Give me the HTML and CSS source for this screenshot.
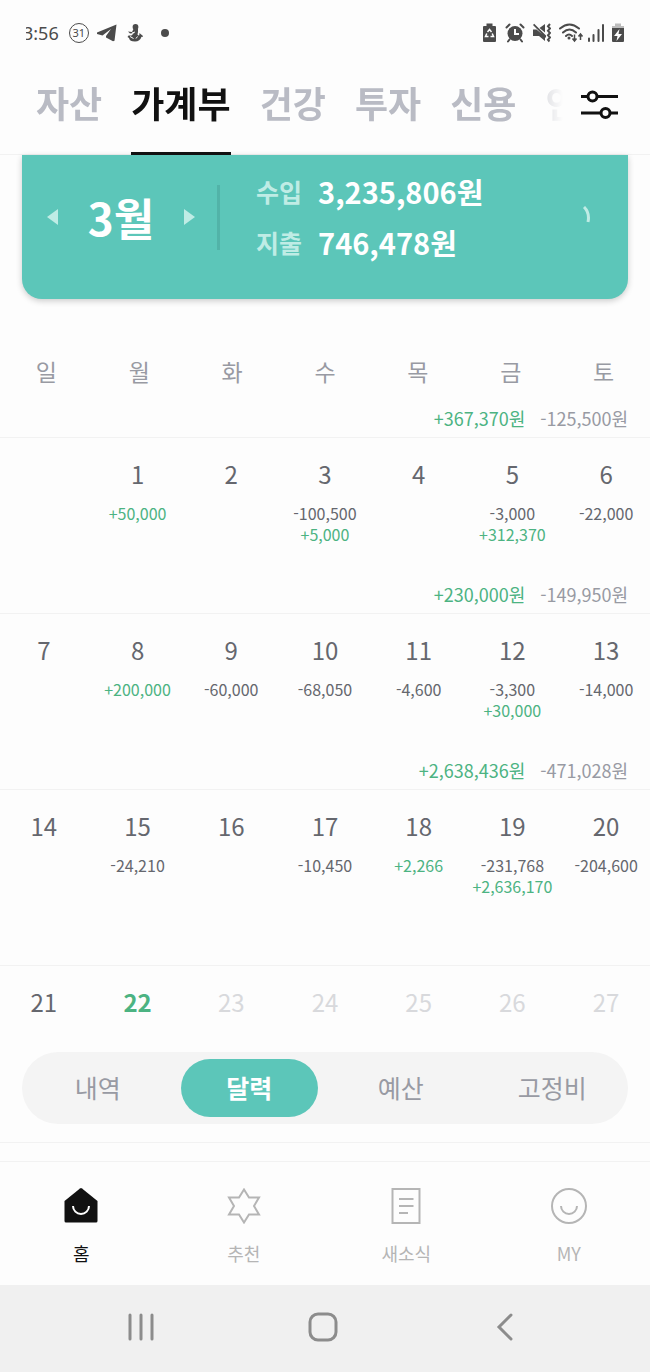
FILE: index.html
```html
<!DOCTYPE html>
<html lang="ko">
<head>
<meta charset="utf-8">
<meta name="viewport" content="width=device-width, initial-scale=1">
<title>가계부</title>
<link rel="stylesheet" href="styles.css">
</head>
<body>
<div class="app">
  <div class="status">
    <div class="status-left">
      <span class="clock">3:56</span>
      <span class="date-badge">31</span>
      <svg class="plane" width="20" height="18" viewBox="0 0 20 18"><path d="M19.500.5 0 8.500v1.500l5.500 1.500L14 5 9 12v1.500l7 3.800 1.500-.5z"/></svg>
      <svg class="figure" width="16" height="18" viewBox="0 0 16 18"><circle cx="8.500" cy="3" r="2.900"/><path d="M6.500 5h4.500v3l-.5 2.500q1 1.500 2 .5l-.5-1.500h1l3 2.500-.5 1-1-.3q-1.500 4.800-6.500 4.800-5.500 0-6-3.500l-1.500-1 1-1.500h3l2.500-2.500L3 9.500 1 7.500 5 8z"/><path class="cut" d="m3 12.500 3.500 2M10.500 12.500l-1.500 2M5 9l3-1"/></svg>
      <span class="dot"></span>
    </div>
    <div class="status-right">
      <svg width="14" height="20" viewBox="0 0 14 20"><path d="M3.500.5h6V3H12q1 0 1 1v14q0 1-1 1H1q-1 0-1-1V4q0-1 1-1h2.500z"/><path class="recycle" d="m4.500 9 2-2.500 2 2.500M3.800 10.500 2.500 13.500H5.500M9.200 10.500l1.300 3H7.500"/></svg>
      <svg width="20" height="20" viewBox="0 0 20 20"><circle cx="10" cy="10.500" r="7.500"/><path class="line" d="m1.500 4.500 3-3M18.500 4.500l-3-3M4.500 16.500 3 18.500M15.500 16.500l1.500 2"/><path class="cut" d="M10 6v5h4"/></svg>
      <svg width="18" height="20" viewBox="0 0 18 20"><path d="M0 6.500h3.500L12 13.500V18l-6-5H0zM6.500 5 12 1v8.500zM0 2l1.200-1.200L13 12.500v2.500z"/><path class="wave" d="m17 1-2 2.300 2 2.200-2 2.300 2 2.200-2 2.300 2 2.200-2 2.300 1.500 1.700"/></svg>
      <svg class="wifi" width="25" height="20" viewBox="0 0 25 20"><path class="line" d="M1 5.500q9.500-8 19 0M4 9.500q6.500-6 13 0M7 13q3-3 6 0"/><circle cx="10" cy="15" r="1.500"/><path class="arrows" d="M15.500 11.500V18m-2-2.500 2 2.500 2-2.500M21.500 17v-6m-2 2.500 2-2.500 2 2.500"/></svg>
      <svg width="16" height="20" viewBox="0 0 16 20"><path class="line" d="M1 15.500V18M5.500 12v6M10.500 7v11M15 2v16"/></svg>
      <svg width="12" height="20" viewBox="0 0 12 20"><path class="pale" d="M3 .5h6V3h3v3H0V3h3z"/><path d="M0 5h12v13q0 1-1 1H1q-1 0-1-1z"/><path class="white" d="M7.500 6 2 13h3.500L4.500 18 10 11H6.500z"/></svg>
    </div>
  </div>

  <header class="top">
    <nav class="tabs">
      <a href="#">자산</a><a href="#" class="active">가계부</a><a href="#">건강</a><a href="#">투자</a><a href="#">신용</a><a href="#">인증</a>
    </nav>
    <button class="filter" aria-label="메뉴 설정">
      <svg width="37" height="34" viewBox="0 0 37 34"><path d="M0 9.500h6.500m10 0H37M0 26h19.500m10 0H37"/><circle cx="11.500" cy="9.500" r="4.500"/><circle cx="24.500" cy="26" r="4.500"/></svg>
    </button>
  </header>

  <main>
    <section class="card">
      <div class="month">
        <button aria-label="이전 달"><svg width="11" height="18" viewBox="0 0 11 18"><path d="M11 1v16L0 9z"/></svg></button>
        <h1>3월</h1>
        <button aria-label="다음 달"><svg width="11" height="18" viewBox="0 0 11 18"><path d="M0 1v16l11-8z"/></svg></button>
      </div>
      <dl class="totals">
        <dt>수입</dt><dd>3,235,806원</dd>
        <dt>지출</dt><dd>746,478원</dd>
      </dl>
      <svg class="spinner" width="8" height="18" viewBox="0 0 8 18"><path d="M1 1q6 6 4 15"/></svg>
    </section>

    <div class="weekdays"><span>일</span><span>월</span><span>화</span><span>수</span><span>목</span><span>금</span><span>토</span></div>

    <div class="calendar-wrap">
    <table class="calendar">
      <tbody>
        <tr class="sum"><td colspan="7"><span class="in">+367,370원</span><span>-125,500원</span></td></tr>
        <tr class="week">
          <td></td>
          <td><b>1</b><p class="in">+50,000</p></td>
          <td><b>2</b></td>
          <td><b>3</b><p>-100,500</p><p class="in">+5,000</p></td>
          <td><b>4</b></td>
          <td><b>5</b><p>-3,000</p><p class="in">+312,370</p></td>
          <td><b>6</b><p>-22,000</p></td>
        </tr>
        <tr class="sum"><td colspan="7"><span class="in">+230,000원</span><span>-149,950원</span></td></tr>
        <tr class="week">
          <td><b>7</b></td>
          <td><b>8</b><p class="in">+200,000</p></td>
          <td><b>9</b><p>-60,000</p></td>
          <td><b>10</b><p>-68,050</p></td>
          <td><b>11</b><p>-4,600</p></td>
          <td><b>12</b><p>-3,300</p><p class="in">+30,000</p></td>
          <td><b>13</b><p>-14,000</p></td>
        </tr>
        <tr class="sum"><td colspan="7"><span class="in">+2,638,436원</span><span>-471,028원</span></td></tr>
        <tr class="week">
          <td><b>14</b></td>
          <td><b>15</b><p>-24,210</p></td>
          <td><b>16</b></td>
          <td><b>17</b><p>-10,450</p></td>
          <td><b>18</b><p class="in">+2,266</p></td>
          <td><b>19</b><p>-231,768</p><p class="in">+2,636,170</p></td>
          <td><b>20</b><p>-204,600</p></td>
        </tr>
        <tr class="sum"><td colspan="7"></td></tr>
        <tr class="week last">
          <td><b>21</b></td>
          <td class="today"><b>22</b></td>
          <td class="future"><b>23</b></td>
          <td class="future"><b>24</b></td>
          <td class="future"><b>25</b></td>
          <td class="future"><b>26</b></td>
          <td class="future"><b>27</b></td>
        </tr>
      </tbody>
    </table>
    </div>

    <div class="views">
      <button>내역</button><button class="active">달력</button><button>예산</button><button>고정비</button>
    </div>
  </main>

  <nav class="bottom">
    <a href="#" class="active">
      <svg width="36" height="36" viewBox="0 0 36 36"><path class="solid" d="M17 .5q1-.8 2 0L34.500 13V33q0 1.500-1.500 1.500H3Q1.500 34.500 1.500 33V13z"/><path class="smile" d="M10 18a8 8 0 0 0 16 0"/></svg>
      <span>홈</span>
    </a>
    <a href="#">
      <svg width="36" height="36" viewBox="0 0 36 36"><path d="m18 1.500 5 8h10L28 18l5 8.500H23l-5 8-5-8H3L8 18 3 9.500h10z"/></svg>
      <span>추천</span>
    </a>
    <a href="#">
      <svg width="36" height="36" viewBox="0 0 36 36"><path d="M4.500 1h27v34h-27zM11 11h14.500M11 18h14.500M11 25h9"/></svg>
      <span>새소식</span>
    </a>
    <a href="#">
      <svg width="36" height="36" viewBox="0 0 36 36"><circle cx="18" cy="18" r="17"/><path d="M10 18a8 8 0 0 0 16 0"/></svg>
      <span>MY</span>
    </a>
  </nav>

  <div class="system">
    <button aria-label="최근 앱"><svg width="30" height="30" viewBox="0 0 30 30"><path d="M4 3v24M15 3v24M26 3v24"/></svg></button>
    <button aria-label="홈 화면"><svg width="30" height="30" viewBox="0 0 30 30"><rect x="2" y="2" width="26" height="26" rx="8"/></svg></button>
    <button aria-label="뒤로"><svg width="30" height="30" viewBox="0 0 30 30"><path d="M21 3 9 15l12 12"/></svg></button>
  </div>
</div>
</body>
</html>
```
FILE: styles.css
```css
* { box-sizing: border-box; }

body {
  margin: 0;
  background: #fdfdfd;
  color: #65676e;
  font-family: "Noto Sans CJK KR", sans-serif;
}

button {
  border: 0;
  padding: 0;
  background: none;
  font: inherit;
  color: inherit;
}

a { color: inherit; text-decoration: none; }
svg { display: block; flex: none; }

.app {
  min-height: 100vh;
  display: flex;
  flex-direction: column;
  overflow: hidden;
}

/* Device status bar */
.status {
  height: 65px;
  padding: 0 26px;
  display: flex;
  align-items: center;
  justify-content: space-between;
  color: #4b4b4b;
}
.status-left, .status-right { display: flex; align-items: center; }
.status-right { gap: 8px; }
.status svg { fill: #4b4b4b; }
.status .line { fill: none; stroke: #4b4b4b; stroke-width: 2; stroke-linecap: round; }
.status .wave { fill: none; stroke: #4b4b4b; stroke-width: 2; }
.status .arrows { fill: none; stroke: #4b4b4b; stroke-width: 1.5; }
.status .cut { fill: none; stroke: #fdfdfd; stroke-width: 2; }
.status .recycle { fill: none; stroke: #fdfdfd; stroke-width: 1.5; }
.status .figure .cut { stroke-width: 1; }
.status .pale { fill: #bdbdbd; }
.status .white { fill: #fdfdfd; }
.wifi { margin-right: -4px; }
.clock {
  overflow: hidden;
  text-indent: -3px;
  font: 18px/24px "Noto Sans", sans-serif;
}
.date-badge {
  width: 20px;
  height: 20px;
  margin: 0 8px 0 10px;
  border: 1px solid #4b4b4b;
  border-radius: 50%;
  text-align: center;
  font: 11px/18px "Noto Sans", sans-serif;
}
.figure { margin: 0 18px 0 10px; }
.dot { width: 8px; height: 8px; border-radius: 50%; background: #4b4b4b; }

/* Section tabs */
.top {
  height: 90px;
  padding-right: 32px;
  display: flex;
  align-items: stretch;
  border-bottom: 1px solid #f2f2f2;
}
.tabs {
  flex: 1;
  min-width: 0;
  margin: 0 18px -1px 0;
  padding-left: 36px;
  display: flex;
  gap: 29px;
  overflow: hidden;
  white-space: nowrap;
  font-size: 36px;
  font-weight: bold;
  line-height: 74px;
  color: #b9bbc4;
  -webkit-mask-image: linear-gradient(to left, transparent, #000 44px);
  mask-image: linear-gradient(to left, transparent, #000 44px);
}
.tabs a { flex: none; }
.tabs .active { color: #111; border-bottom: 3px solid #111; }
.filter { height: 78px; }
.filter svg { fill: none; stroke: #111; stroke-width: 3; }

/* Month summary */
.card {
  margin: 0 22px;
  padding: 11px 37px 31px 25px;
  display: flex;
  align-items: center;
  background: #5cc6b9;
  border-radius: 0 0 20px 20px;
  box-shadow: 0 2px 6px rgba(0, 0, 0, .2);
  color: #fff;
}
.month {
  width: 173px;
  height: 65px;
  padding-right: 22px;
  display: flex;
  align-items: center;
  justify-content: space-between;
  border-right: 3px solid #52b3a8;
}
.month svg { fill: #bfece5; }
.month h1 { margin: 0; font-size: 44px; line-height: 64px; }
.totals {
  flex: 1;
  margin: 0;
  padding-left: 36px;
  display: grid;
  grid-template-columns: auto 1fr;
  column-gap: 16px;
  font-weight: bold;
  line-height: 51px;
}
.totals dt { font-size: 25px; color: #bfece5; }
.totals dd { margin: 0; font-size: 29px; }
.spinner { fill: none; stroke: #bfece5; stroke-width: 3; margin-bottom: 4px; }

/* Calendar */
.weekdays {
  margin-top: 43px;
  display: grid;
  grid-template-columns: repeat(7, 1fr);
  text-align: center;
  font-size: 23px;
  line-height: 58px;
  color: #989aa3;
}
.calendar-wrap { margin: 0 -3px; }
.calendar {
  width: 100%;
  border-collapse: collapse;
  table-layout: fixed;
}
.calendar td { padding: 0; }
.sum td {
  height: 37px;
  padding-right: 25px;
  text-align: right;
  font-size: 18px;
  line-height: 36px;
  color: #989aa3;
}
.sum span { margin-left: 15px; }
.week { height: 139px; border-top: 1px solid #f2f2f2; }
.week td { vertical-align: top; text-align: center; font-size: 16px; }
.week b {
  display: block;
  padding: 18px 0 11px;
  font-size: 24px;
  font-weight: normal;
  line-height: 36px;
}
.week p { margin: 0; line-height: 21px; }
.last { height: 87px; }
.calendar .in { color: #4cb382; }
.week .today b { color: #4cb382; font-weight: bold; }
.future { color: #d8d9dc; }

/* View switch */
.views {
  height: 72px;
  margin: 0 22px 18px;
  display: grid;
  grid-template-columns: repeat(4, 1fr);
  background: #f4f4f4;
  border-radius: 36px;
  font-size: 25px;
  color: #989aa3;
}
.views button { margin: 7px; padding-bottom: 2px; border-radius: 30px; line-height: 36px; }
.views .active { background: #5cc6b9; color: #fff; font-weight: bold; }

/* App navigation */
main { border-bottom: 1px solid #f2f2f2; }
.bottom {
  height: 124px;
  margin-top: 18px;
  padding-top: 26px;
  display: grid;
  grid-template-columns: repeat(4, 1fr);
  border-top: 1px solid #f2f2f2;
  font-size: 18px;
  line-height: 26px;
  color: #b5b5b5;
}
.bottom a { display: flex; flex-direction: column; align-items: center; gap: 16px; }
.bottom .active { color: #111; }
.bottom svg { fill: none; stroke: #b5b5b5; stroke-width: 2; }
.bottom .solid { fill: #111; stroke: none; }
.bottom .smile { stroke: #fff; }

/* Device navigation */
.system {
  flex: 1;
  min-height: 84px;
  padding: 0 54px 4px 50px;
  display: grid;
  grid-template-columns: repeat(3, 1fr);
  background: #f0f0f0;
}
.system button { display: grid; place-items: center; }
.system svg { fill: none; stroke: #8c8c8c; stroke-width: 3; stroke-linecap: round; }
```
